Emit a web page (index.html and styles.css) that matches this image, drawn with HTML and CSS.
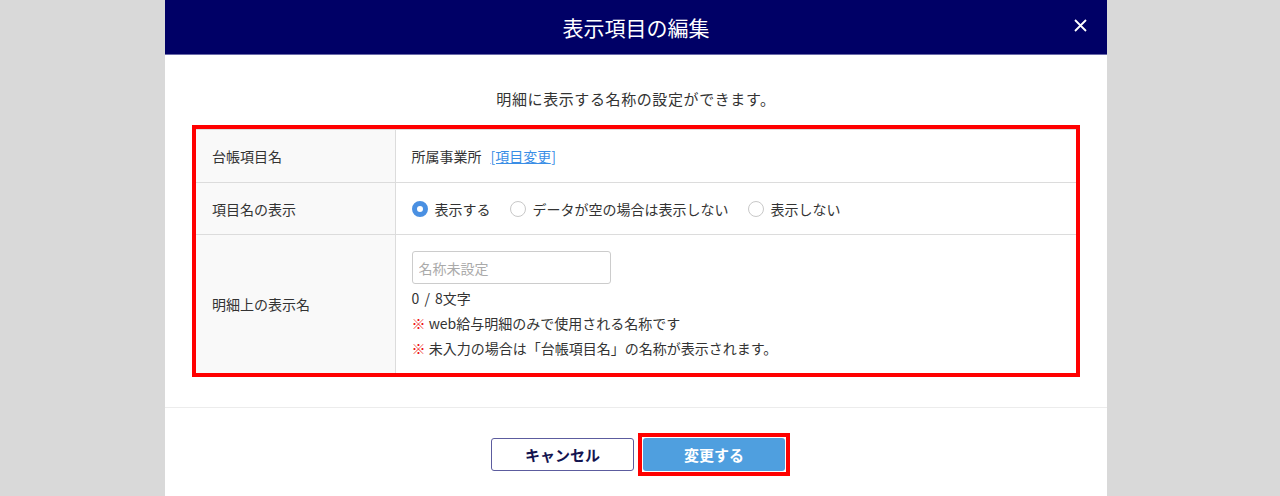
FILE: index.html
```html
<!DOCTYPE html>
<html lang="ja">
<head>
    <meta charset="UTF-8">
    <title>表示項目の編集</title>
    <link rel="stylesheet" href="styles.css">
</head>
<body>

<div class="modal">
    <div class="modal-head">
        <h1>表示項目の編集</h1>
        <a href="javascript:;" class="close">
            <svg width="13" height="13" viewBox="0 0 13 13">
                <path d="M1 1L12 12M12 1L1 12" stroke="#fff" stroke-width="1.8" fill="none"/>
            </svg>
        </a>
    </div>

    <div class="modal-body">
        <p class="lead">明細に表示する名称の設定ができます。</p>

        <div class="mark">
            <table class="form">
                <tr class="row1">
                    <th>台帳項目名</th>
                    <td>所属事業所<a href="javascript:;" class="change">[項目変更]</a></td>
                </tr>
                <tr class="row2">
                    <th>項目名の表示</th>
                    <td>
                        <div class="radios">
                            <label><span class="radio on"></span>表示する</label>
                            <label><span class="radio"></span>データが空の場合は表示しない</label>
                            <label><span class="radio"></span>表示しない</label>
                        </div>
                    </td>
                </tr>
                <tr class="row3">
                    <th>明細上の表示名</th>
                    <td>
                        <input type="text" class="name" placeholder="名称未設定">
                        <p class="count">0 / 8文字</p>
                        <p class="note"><span>※</span> web給与明細のみで使用される名称です</p>
                        <p class="note"><span>※</span> 未入力の場合は「台帳項目名」の名称が表示されます。</p>
                    </td>
                </tr>
            </table>
        </div>
    </div>

    <div class="modal-foot">
        <a href="javascript:;" class="btn cancel">キャンセル</a>
        <div class="mark-btn">
            <a href="javascript:;" class="btn submit">変更する</a>
        </div>
    </div>
</div>

</body>
</html>
```

FILE: styles.css
```css
*{
    margin: 0px;
    padding: 0px;
    box-sizing: border-box;
}
body{
    background-color: #d9d9d9;
    font-family: "Noto Sans CJK JP", "Noto Sans", sans-serif;
    color: #333;
    font-size: 14px;
}
.modal{
    width: 942px;
    height: 496px;
    margin-left: 165px;
    background-color: #fff;
}
.modal-head{
    height: 55px;
    background-color: #000066;
    border-bottom: 1px solid #6a6aa8;
    display: flex;
    align-items: center;
    justify-content: center;
    position: relative;
}
.modal-head h1{
    color: #fff;
    font-size: 21px;
    font-weight: normal;
    line-height: 26px;
}
.close{
    position: absolute;
    right: 20px;
    top: 19px;
    display: block;
    width: 13px;
    height: 13px;
}
.close svg{
    display: block;
}
.modal-body{
    padding: 32px 27px 30px;
    border-bottom: 1px solid #ececec;
}
.lead{
    text-align: center;
    font-size: 15px;
    letter-spacing: 0.6px;
    line-height: 24px;
    margin-bottom: 14px;
}
.mark{
    border: 4px solid #ff0000;
}
.form{
    width: 100%;
    border-collapse: collapse;
    border-top: 1px solid #dcdcdc;
}
.form th{
    width: 199px;
    background-color: #f9f9f9;
    font-weight: normal;
    text-align: left;
    padding-left: 16px;
    border-right: 1px solid #dcdcdc;
    line-height: 24px;
}
.form td{
    padding: 0px 16px;
    line-height: 24px;
}
.form tr{
    border-bottom: 1px solid #dcdcdc;
}
.form tr.row3{
    border-bottom: none;
}
.row1 th, .row1 td{
    height: 53px;
}
.row2 th, .row2 td{
    height: 52px;
}
.row3 td{
    padding-top: 16px;
    padding-bottom: 12px;
}
.change{
    color: #3a8ee6;
    margin-left: 9px;
}
.radios{
    display: flex;
    gap: 19px;
}
.radios label{
    display: flex;
    align-items: center;
    gap: 7px;
}
.radio{
    width: 16px;
    height: 16px;
    border-radius: 50%;
    border: 1px solid #c8c8c8;
    background-color: #fff;
}
.radio.on{
    border: 5px solid #4a90e2;
}
.name{
    display: block;
    width: 199px;
    height: 33px;
    border: 1px solid #cccccc;
    border-radius: 3px;
    padding: 0px 6px;
    font-family: inherit;
    font-size: 14px;
    color: #333;
}
.name::placeholder{
    color: #aaa;
}
.count{
    margin-top: 2px;
    word-spacing: 2px;
}
.note{
    line-height: 25px;
}
.count + .note{
    margin-top: 1px;
}
.note span{
    color: #ee1111;
}
.modal-foot{
    display: flex;
    justify-content: center;
    align-items: center;
    gap: 4px;
    padding: 25px 0px 0px 9px;
}
.btn{
    display: flex;
    align-items: center;
    justify-content: center;
    height: 33px;
    font-size: 15px;
    font-weight: bold;
    text-decoration: none;
    border-radius: 3px;
}
.cancel{
    width: 143px;
    border: 1px solid #5c5c9e;
    color: #141450;
}
.mark-btn{
    border: 4px solid #ff0000;
    padding: 1px;
}
.submit{
    width: 142px;
    background-color: #4f9fdf;
    color: #fff;
}
```
